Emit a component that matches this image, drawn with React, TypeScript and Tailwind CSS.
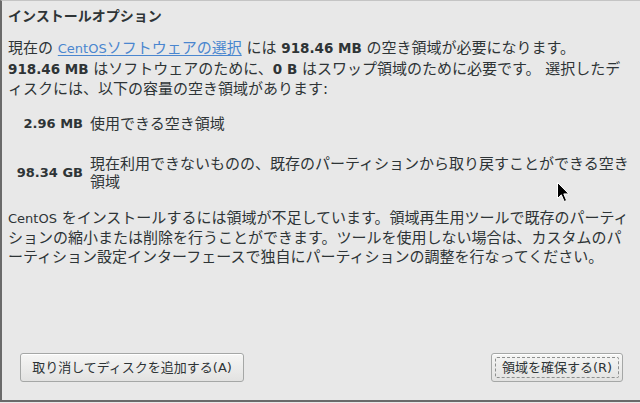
import React from "react";

const FONT = '"DejaVu Sans", "Noto Sans CJK JP", sans-serif';

function Latin({ children, bold }: { children: React.ReactNode; bold?: boolean }) {
  return <span className={bold ? "text-[13.5px] font-bold" : "text-[13px]"}>{children}</span>;
}

function DialogButton({ label, focused }: { label: string; focused?: boolean }) {
  return (
    <button className="relative h-[29px] w-full whitespace-nowrap rounded-[3px] border border-[#a5a7a6] bg-gradient-to-b from-[#f6f6f5] to-[#e2e2e1] text-center text-[13px] text-[#2e3436] shadow-[inset_0_1px_0_#ffffff]">
      {focused && (
        <span className="pointer-events-none absolute inset-[3px] rounded-[2px] border border-dashed border-[#8d8f8e]" />
      )}
      {label}
    </button>
  );
}

function Cursor() {
  return (
    <svg
      className="absolute left-[557px] top-[182px]"
      width="13"
      height="21"
      viewBox="0 0 13 21"
    >
      <path
        d="M0.5 0.5 L0.5 16.5 L4.3 12.8 L7.2 19.5 L9.6 18.5 L6.8 11.9 L11.8 11.9 Z"
        fill="#000"
        stroke="#fff"
        strokeWidth="1"
        strokeLinejoin="round"
      />
    </svg>
  );
}

export default function App() {
  return (
    <div
      className="relative h-[403px] w-[640px] overflow-hidden bg-[#e8e8e8] text-[#2e3436]"
      style={{ fontFamily: FONT }}
    >
      <div className="flex h-[402px] flex-col border-b-2 border-l-2 border-t border-b-[#6a6a6a] border-l-[#6a6a6a] border-t-[#c4c4c4] pl-[6px] pr-[8px]">
        <h1 className="mt-[5px] text-[14px] font-bold leading-[20px]">インストールオプション</h1>

        <p className="mt-[12px] text-[15px] leading-[20px]">
          現在の{" "}
          <a className="text-[#4a86cf] underline underline-offset-2">
            <Latin>CentOS</Latin>ソフトウェアの選択
          </a>{" "}
          には <Latin bold>918.46 MB</Latin> の空き領域が必要になります。
          <br />
          <Latin bold>918.46 MB</Latin> はソフトウェアのために、<Latin bold>0 B</Latin>{" "}
          はスワップ領域のために必要です。 選択したデ
          <br />
          ィスクには、以下の容量の空き領域があります:
        </p>

        <div className="mt-[15px] grid grid-cols-[75px_1fr] items-center gap-x-[7px] gap-y-[21px]">
          <div className="text-right text-[13px] font-bold leading-[20px]">2.96 MB</div>
          <div className="text-[15px] leading-[20px]">使用できる空き領域</div>
          <div className="text-right text-[13px] font-bold leading-[20px]">98.34 GB</div>
          <div className="text-[15px] leading-[18px]">
            現在利用できないものの、既存のパーティションから取り戻すことができる空き
            <br />
            領域
          </div>
        </div>

        <p className="mt-[18px] text-[15px] leading-[19.5px]">
          <Latin>CentOS</Latin> をインストールするには領域が不足しています。領域再生用ツールで既存のパーティ
          <br />
          ションの縮小または削除を行うことができます。ツールを使用しない場合は、カスタムのパ
          <br />
          ーティション設定インターフェースで独自にパーティションの調整を行なってください。
        </p>

        <div className="mt-auto mb-[18px] flex items-center justify-between pl-[12px] pr-[9px]">
          <div className="flex w-[224px]">
            <DialogButton label="取り消してディスクを追加する(A)" />
          </div>
          <div className="flex w-[132px]">
            <DialogButton label="領域を確保する(R)" focused />
          </div>
        </div>
      </div>
      <Cursor />
    </div>
  );
}
